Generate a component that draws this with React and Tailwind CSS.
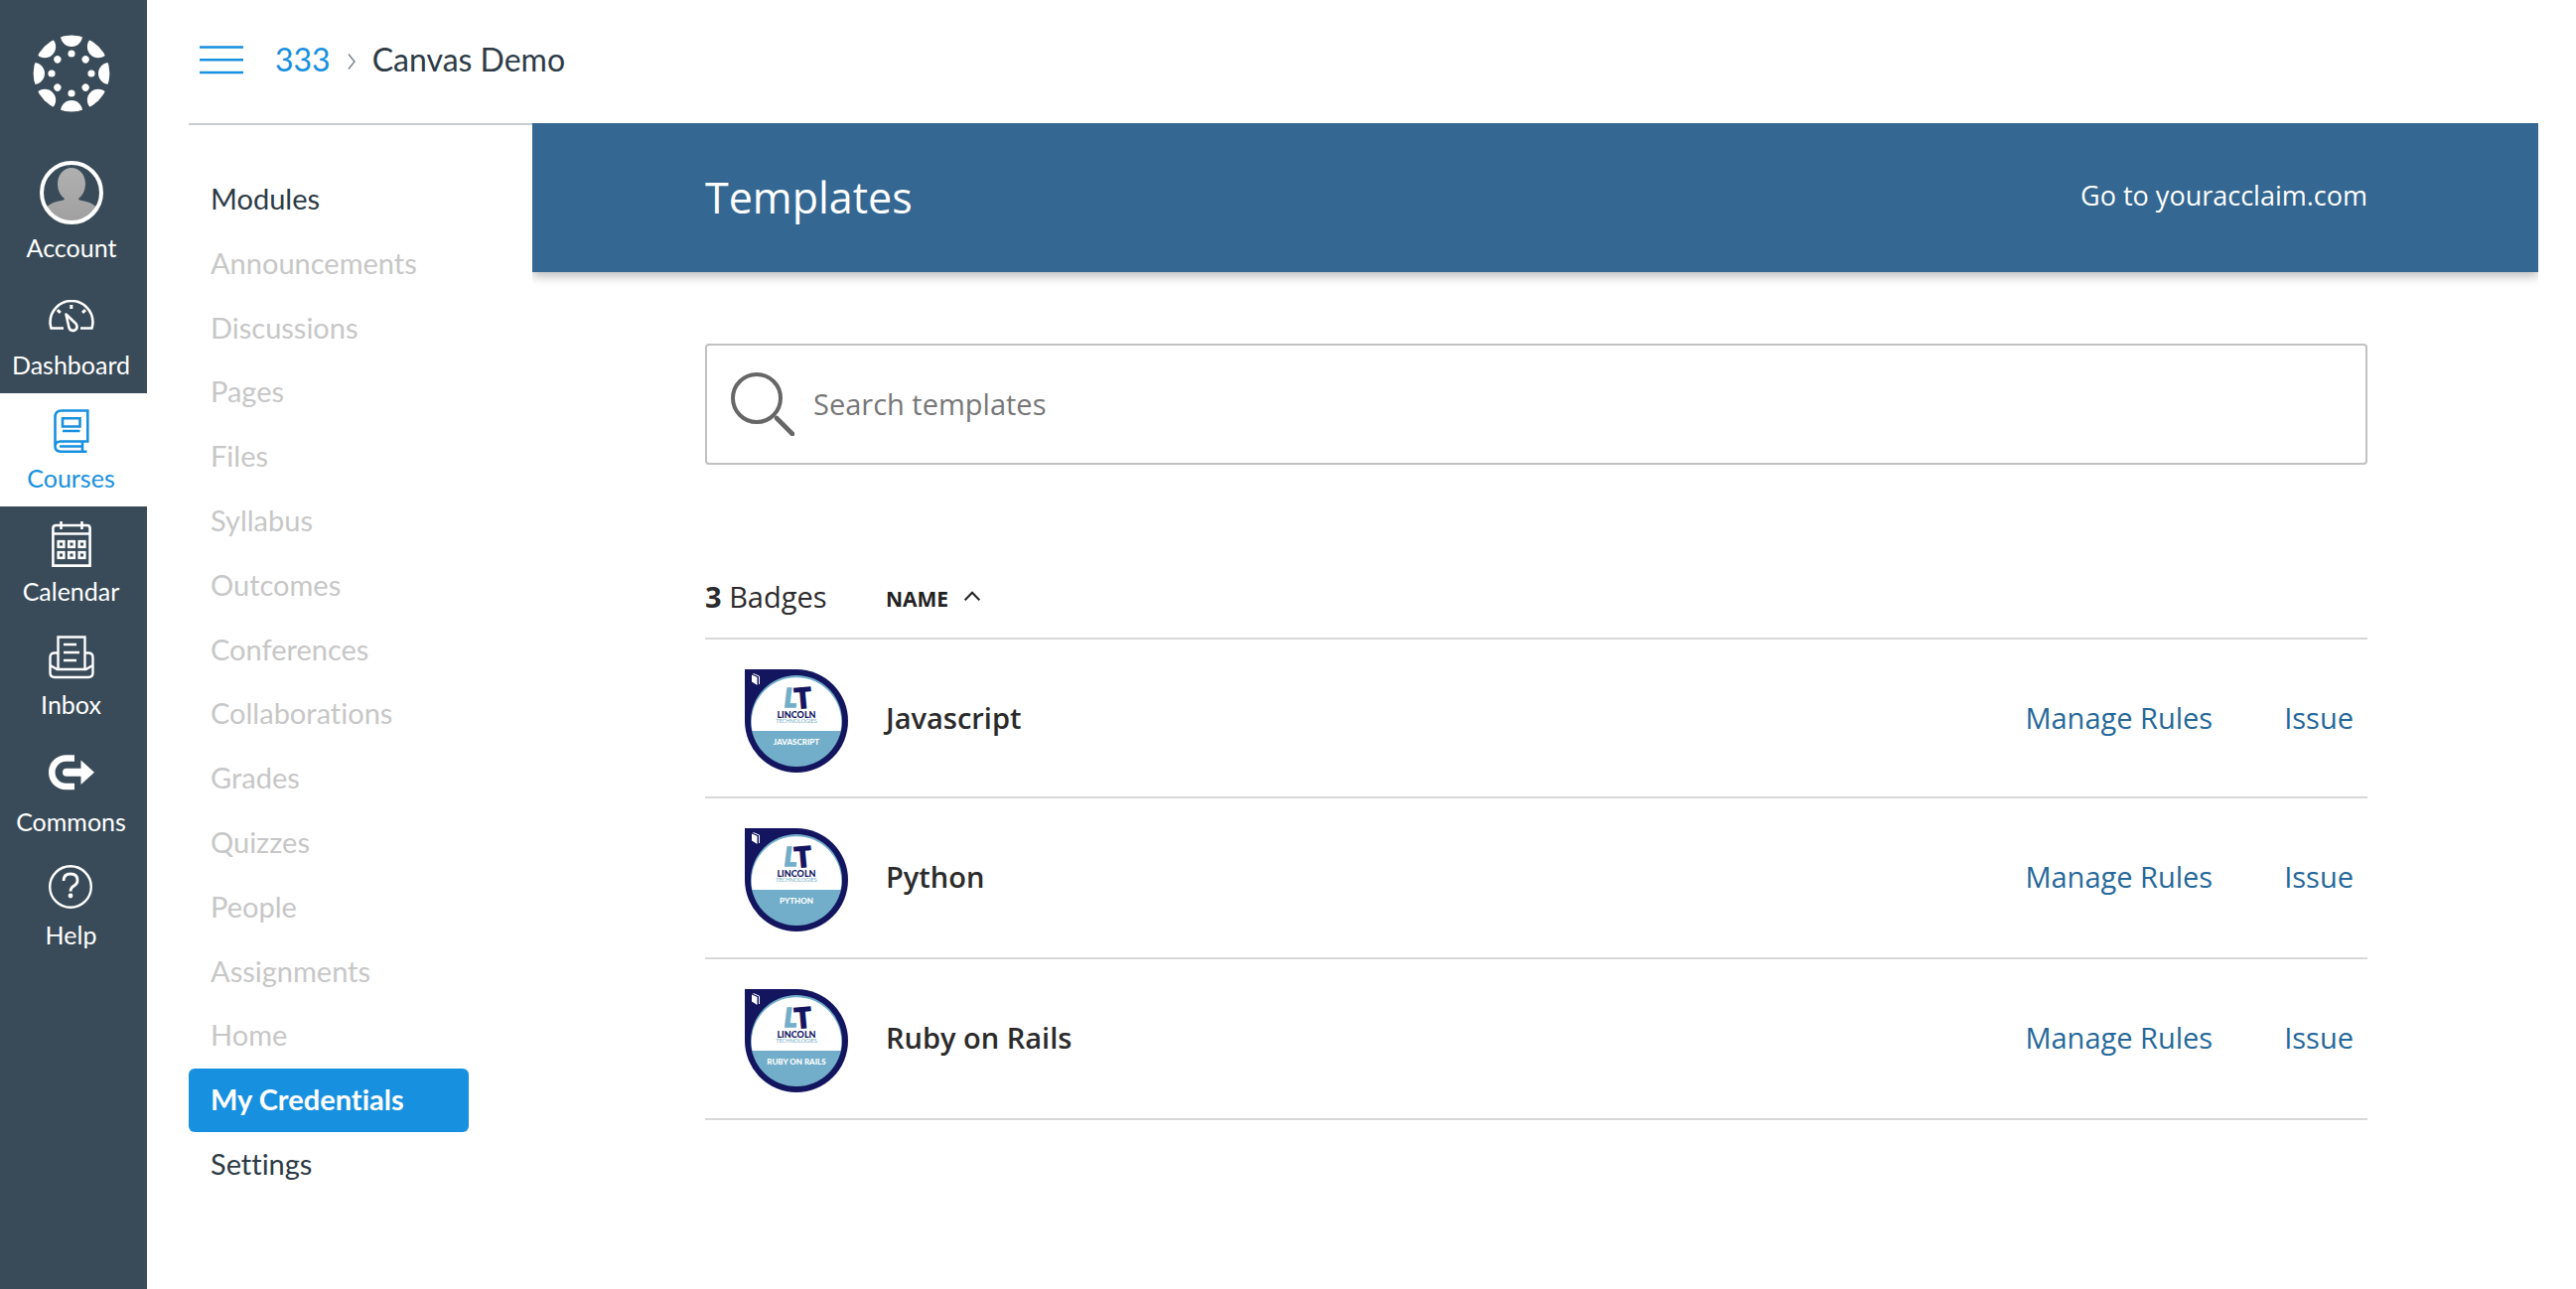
import React from "react";

function CanvasLogo() {
  const angles = [0, 45, 90, 135, 180, 225, 270, 315];
  return (
    <svg width="78" height="78" viewBox="-39 -39 78 78" fill="#fff" aria-hidden="true">
      <clipPath id="logo-disc">
        <circle r="38.4" />
      </clipPath>
      <g clipPath="url(#logo-disc)">
        {angles.map((a) => (
          <circle key={a} cx="0" cy="-38" r="11" transform={`rotate(${a})`} />
        ))}
      </g>
      {angles.map((a) => (
        <circle key={a} cx="0" cy="-20" r="3.6" transform={`rotate(${a})`} />
      ))}
    </svg>
  );
}

function Avatar() {
  return (
    <svg width="64" height="64" viewBox="0 0 64 64" aria-hidden="true">
      <defs>
        <clipPath id="avatar-disc">
          <circle cx="32" cy="32" r="29" />
        </clipPath>
        <linearGradient id="avatar-fill" x1="0" y1="0" x2="0" y2="64" gradientUnits="userSpaceOnUse">
          <stop offset="0" stopColor="#b2b2b2" />
          <stop offset="1" stopColor="#9f9f9f" />
        </linearGradient>
      </defs>
      <g clipPath="url(#avatar-disc)" fill="url(#avatar-fill)">
        <path d="M32 7c8 0 14 7 14 16 0 7-3 12-7 15 0 1 1 1.500 3 2 8 1 14 4 18 10v14H4V50c4-6 10-9 18-10 2-.5 3-1 3-2-4-3-7-8-7-15 0-9 6-16 14-16z" />
      </g>
      <circle cx="32" cy="32" r="30" fill="none" stroke="#fff" strokeWidth="4" />
    </svg>
  );
}

function DashboardIcon() {
  return (
    <svg width="46" height="33" viewBox="0 0 46 33" fill="none" stroke="currentColor" strokeWidth="2.6" aria-hidden="true">
      <path d="M15 28.500H2.500Q1.500 25 1.500 22.500A21.300 21.300 0 0 1 44.500 22.500Q44.500 25 43.500 28.500H32" />
      <path d="M17.500 14.500 27.500 24Q30 28 26.500 30.500Q22 32 20.500 28Z" strokeLinejoin="round" />
      <path d="M22.800 5v4M8.800 10.200l3 2.600M37 10.200l-3 2.600" strokeWidth="3" />
    </svg>
  );
}

function CoursesIcon() {
  return (
    <svg width="36" height="44" viewBox="0 0 36 44" fill="none" stroke="currentColor" strokeWidth="2.6" aria-hidden="true">
      <path d="M1.500 37V8Q1.500 1.500 8 1.500H34.300V32.500H7Q1.500 32.500 1.500 37.500T7 42.700H33.500" />
      <path d="M6 37.500H28M29 32.500V42.700" />
      <path d="M9 9.300H26.500V17.500H9ZM9 22H26.500" />
    </svg>
  );
}

function CalendarIcon() {
  return (
    <svg width="40" height="46" viewBox="0 0 40 46" fill="none" stroke="currentColor" strokeWidth="2.6" aria-hidden="true">
      <path d="M1.400 44.600V7Q1.400 4 4.400 4H35.600Q38.600 4 38.600 7V44.600ZM1.400 12.500H38.600" />
      <path d="M9.500 0v8M30.500 0v8" />
      {[23, 34].map((y) =>
        [9.5, 20, 30.5].map((x) => (
          <rect key={`${x}-${y}`} x={x - 2.8} y={y - 2.8} width="5.6" height="5.6" />
        ))
      )}
    </svg>
  );
}

function InboxIcon() {
  return (
    <svg width="46" height="44" viewBox="0 0 46 44" fill="none" stroke="currentColor" strokeWidth="2.4" aria-hidden="true">
      <path d="M9.500 34V1.500H36.500V34" />
      <path d="M15 9H28M15 17H31M15 25H28" />
      <path d="M9.500 17.500H6Q1.500 17.500 1.500 22V37.500Q1.500 42 6 42H40Q44.500 42 44.500 37.500V22Q44.500 17.500 40 17.500H36.500" />
      <path d="M1.500 30 8.500 34H37.500L44.500 30" />
    </svg>
  );
}

function CommonsIcon() {
  return (
    <svg width="46" height="36" viewBox="0 0 46 36" fill="none" stroke="currentColor" aria-hidden="true">
      <path d="M26 3.500H17.500A14.200 14.200 0 0 0 17.500 32H26" strokeWidth="6.6" />
      <path d="M18 17.700H33" strokeWidth="8" strokeLinecap="round" />
      <path d="M32.500 5.500 46 17.700 32.500 30Z" fill="currentColor" stroke="none" />
    </svg>
  );
}

function HelpIcon() {
  return (
    <svg width="46" height="46" viewBox="0 0 46 46" fill="none" stroke="currentColor" strokeWidth="2.4" aria-hidden="true">
      <circle cx="22" cy="22" r="20.8" />
      <path d="M15 16Q15 9 22 9T29 15.500Q29 19 25.500 21T22 26.500" strokeWidth="2.8" />
      <circle cx="22" cy="31" r="2.400" fill="currentColor" stroke="none" />
    </svg>
  );
}

function SearchIcon() {
  return (
    <svg className="shrink-0" width="64" height="64" viewBox="0 0 64 64" fill="none" stroke="#666" strokeWidth="4" aria-hidden="true">
      <circle cx="26" cy="26" r="24" />
      <path d="M46 46 62 62" strokeWidth="4.600" strokeLinecap="round" />
    </svg>
  );
}

const globalNav = [
  { label: "Dashboard", Icon: DashboardIcon, tall: true },
  { label: "Courses", Icon: CoursesIcon, active: true },
  { label: "Calendar", Icon: CalendarIcon },
  { label: "Inbox", Icon: InboxIcon },
  { label: "Commons", Icon: CommonsIcon, tall: true },
  { label: "Help", Icon: HelpIcon },
];

function GlobalNav() {
  return (
    <nav
      aria-label="Global navigation"
      className="flex w-[148px] shrink-0 flex-col bg-[#394b58] text-[25px] leading-10 text-white"
    >
      <a href="#home" aria-label="Canvas home" className="flex justify-center pt-[35px] pr-1 pb-[37px]">
        <CanvasLogo />
      </a>
      <a href="#account" className="flex flex-col items-center gap-[3px] pt-3 pr-1 pb-[9px]">
        <Avatar />
        Account
      </a>
      {globalNav.map(({ label, Icon, tall, active }) => (
        <a
          key={label}
          href={`#${label.toLowerCase()}`}
          className={`flex flex-col items-center gap-px pt-3 pr-[5px] pb-[9px] ${active ? "bg-white text-[#1890e0]" : ""}`}
        >
          <span className={`flex items-center ${tall ? "h-14" : "h-[52px]"}`}>
            <Icon />
          </span>
          {label}
        </a>
      ))}
    </nav>
  );
}

const courseNav = [
  { label: "Modules", tone: "text-[#2d3b45]" },
  { label: "Announcements", tone: "text-[#c7c7c7]" },
  { label: "Discussions", tone: "text-[#c7c7c7]" },
  { label: "Pages", tone: "text-[#c7c7c7]" },
  { label: "Files", tone: "text-[#c7c7c7]" },
  { label: "Syllabus", tone: "text-[#c7c7c7]" },
  { label: "Outcomes", tone: "text-[#c7c7c7]" },
  { label: "Conferences", tone: "text-[#c7c7c7]" },
  { label: "Collaborations", tone: "text-[#c7c7c7]" },
  { label: "Grades", tone: "text-[#c7c7c7]" },
  { label: "Quizzes", tone: "text-[#c7c7c7]" },
  { label: "People", tone: "text-[#c7c7c7]" },
  { label: "Assignments", tone: "text-[#c7c7c7]" },
  { label: "Home", tone: "text-[#c7c7c7]" },
  { label: "My Credentials", tone: "bg-[#1890e0] font-bold text-white" },
  { label: "Settings", tone: "text-[#2d3b45]" },
];

function CourseNav() {
  return (
    <nav aria-label="Course navigation" className="w-[346px] shrink-0 pt-[43px]">
      <ul className="flex min-h-[1036px] w-[282px] flex-col justify-between">
        {courseNav.map(({ label, tone }) => (
          <li key={label}>
            <a
              href={`#${label.toLowerCase().replace(/ /g, "-")}`}
              className={`block rounded-md px-[22px] pb-0.5 text-[29px] leading-[62px] ${tone}`}
            >
              {label}
            </a>
          </li>
        ))}
      </ul>
    </nav>
  );
}

function Badge({ title }) {
  return (
    <svg className="block" width="104" height="104" viewBox="0 0 104 104" fontFamily="Lato, sans-serif" textAnchor="middle" role="img" aria-label={`${title} badge`}>
      <path d="M0 0H52A52 52 0 1 1 0 52Z" fill="#13155f" />
      <circle cx="52" cy="52" r="46" fill="#72aec9" />
      <path d="M7.500 62A45.300 45.300 0 1 1 96.500 62Z" fill="#fff" />
      <path d="M7 5.500 12.500 8V16L7 12.500Z" fill="#fff" />
      <path d="M8.500 4.500 14.500 7V15" fill="none" stroke="#fff" />
      <g fontWeight="900">
        <text x="46" y="38" fontSize="26" fill="#72aec9" stroke="#72aec9" strokeWidth="1.4" fontStyle="italic">L</text>
        <text x="58.500" y="39" fontSize="28" fill="#13155f" stroke="#13155f" strokeWidth="1.4" transform="rotate(-5 58 28)">T</text>
      </g>
      <text x="52" y="49" fontSize="9" fontWeight="900" fill="#13155f">LINCOLN</text>
      <text x="52" y="54" fontSize="5.500" fill="#72aec9">TECHNOLOGIES</text>
      <text x="52" y="76" fontSize="8" fontWeight="900" fill="#fff">{title.toUpperCase()}</text>
    </svg>
  );
}

const badges = ["Javascript", "Python", "Ruby on Rails"];

function BadgeTable() {
  return (
    <table className="mt-[100px] w-full text-left text-[29px] leading-10 text-[#2b2b2b]">
      <thead>
        <tr className="border-b-2 border-[#d8d8d8]">
          <th scope="col" className="w-[182px] pt-[13px] pb-[21px] font-normal whitespace-nowrap">
            <strong className="font-bold">3</strong> Badges
          </th>
          <th scope="col" colSpan={2} className="pt-[15px] pb-[19px]">
            <button type="button" className="flex items-center gap-4 text-[21px] font-bold text-[#222]">
              NAME
              <svg className="mb-1.5" width="16" height="10" viewBox="0 0 16 10" fill="none" stroke="currentColor" strokeWidth="2" aria-hidden="true">
                <path d="M.7 9.300 8 1.700 15.300 9.300" />
              </svg>
            </button>
          </th>
        </tr>
      </thead>
      <tbody>
        {badges.map((title) => (
          <tr key={title} className="h-[162px] border-b-2 border-[#d8d8d8] align-top first:h-[160px]">
            <td className="pt-[30px] pl-10">
              <Badge title={title} />
            </td>
            <td className="pt-[59px] font-semibold">{title}</td>
            <td className="pt-[59px] pr-3.5">
              <div className="flex justify-end gap-[72px] text-[#26689a]">
                <a href="#rules">Manage Rules</a>
                <a href="#issue">Issue</a>
              </div>
            </td>
          </tr>
        ))}
      </tbody>
    </table>
  );
}

function TemplatesPanel() {
  return (
    <main className="min-w-0 flex-1 overflow-hidden font-['Open_Sans',sans-serif]">
      <header className="flex h-[150px] items-center justify-between bg-[#346791] pr-[172px] pl-[174px] text-white shadow-[0_4px_10px_rgba(0,0,0,0.28)]">
        <h1 className="text-[43px] leading-[60px] font-medium">Templates</h1>
        <a href="#youracclaim" className="pb-1 text-[27px] leading-10">
          Go to youracclaim.com
        </a>
      </header>
      <div className="pt-[72px] pr-[172px] pl-[174px]">
        <label className="flex h-[122px] items-center gap-[19px] rounded border-2 border-[#c1c1c1] px-6">
          <SearchIcon />
          <input
            type="search"
            aria-label="Search templates"
            placeholder="Search templates"
            className="min-w-0 flex-1 text-[29px] leading-10 text-[#333] outline-none placeholder:text-[#777]"
          />
        </label>
        <BadgeTable />
      </div>
    </main>
  );
}

export default function App() {
  return (
    <div className="flex min-h-screen bg-white font-['Lato',sans-serif] [font-variant-ligatures:none]">
      <GlobalNav />
      <div className="flex min-w-0 flex-1 flex-col pr-[38px] pl-[42px]">
        <header className="flex h-[124px] items-center pl-[11px] pb-1 text-[32px] leading-10">
          <button type="button" aria-label="Toggle course navigation" className="text-[#1890e0]">
            <svg width="44" height="30" viewBox="0 0 44 30" stroke="currentColor" strokeWidth="2.600" aria-hidden="true">
              <path d="M0 2.500H44M0 15.300H44M0 28H44" />
            </svg>
          </button>
          <nav aria-label="Breadcrumb" className="flex items-center pl-8">
            <a href="#333" className="text-[#1890e0]">333</a>
            <svg className="mx-[17px] mt-1" width="8" height="16" viewBox="0 0 8 16" fill="none" stroke="#73818c" strokeWidth="1.400" aria-hidden="true">
              <path d="M1 .5 7 8 1 15.500" />
            </svg>
            <span className="text-[#2d3b45]">Canvas Demo</span>
          </nav>
        </header>
        <div className="flex flex-1">
          <div className="shrink-0 border-t-2 border-[#c7cdd1]">
            <CourseNav />
          </div>
          <TemplatesPanel />
        </div>
      </div>
    </div>
  );
}
